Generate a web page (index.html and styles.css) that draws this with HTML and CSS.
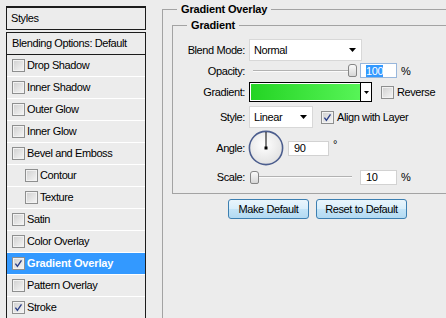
FILE: index.html
```html
<!DOCTYPE html>
<html>
<head>
<meta charset="utf-8">
<link rel="stylesheet" href="styles.css">
</head>
<body>
<div class="app">
  <div class="sidebar">
    <div class="styles-head">Styles</div>
    <div class="list">
      <div class="row blend">Blending Options: Default</div>
      <div class="row"><span class="cb"></span>Drop Shadow</div>
      <div class="row"><span class="cb"></span>Inner Shadow</div>
      <div class="row"><span class="cb"></span>Outer Glow</div>
      <div class="row"><span class="cb"></span>Inner Glow</div>
      <div class="row"><span class="cb"></span>Bevel and Emboss</div>
      <div class="row sub"><span class="cb"></span>Contour</div>
      <div class="row sub"><span class="cb"></span>Texture</div>
      <div class="row"><span class="cb"></span>Satin</div>
      <div class="row"><span class="cb"></span>Color Overlay</div>
      <div class="row active"><span class="cb"><svg width="11" height="11" viewBox="0 0 11 11"><path d="M2.4 5.6 L4.4 8.3 L8.5 2.3" fill="none" stroke="#2b3f88" stroke-width="1.4"/></svg></span>Gradient Overlay</div>
      <div class="row"><span class="cb"></span>Pattern Overlay</div>
      <div class="row"><span class="cb"><svg width="11" height="11" viewBox="0 0 11 11"><path d="M2.4 5.6 L4.4 8.3 L8.5 2.3" fill="none" stroke="#2b3f88" stroke-width="1.4"/></svg></span>Stroke</div>
    </div>
  </div>
  <div class="main">
    <fieldset class="outer">
      <legend>Gradient Overlay</legend>
      <fieldset class="inner">
        <legend>Gradient</legend>
        <div class="frow h-blend">
          <span class="lbl">Blend Mode:</span>
          <div class="select wide"><span>Normal</span><svg width="7" height="4" viewBox="0 0 7 4"><polygon points="0,0 7,0 3.5,4" fill="#000"/></svg></div>
        </div>
        <div class="frow h-opac">
          <span class="lbl">Opacity:</span>
          <div class="slider"><span class="track t-opac"></span><span class="thumb th-opac"></span></div>
          <div class="num focus"><span class="sel">100</span></div>
          <span class="unit">%</span>
        </div>
        <div class="frow h-grad">
          <span class="lbl">Gradient:</span>
          <div class="gbox"><span class="gfill"></span><span class="gdrop"><svg width="5" height="3" viewBox="0 0 5 3"><polygon points="0,0 5,0 2.5,3" fill="#000"/></svg></span></div>
          <span class="cb cb-rev"></span><span class="clbl">Reverse</span>
        </div>
        <div class="frow h-style">
          <span class="lbl">Style:</span>
          <div class="select narrow"><span>Linear</span><svg width="7" height="4" viewBox="0 0 7 4"><polygon points="0,0 7,0 3.5,4" fill="#000"/></svg></div>
          <span class="cb cb-align"><svg width="11" height="11" viewBox="0 0 11 11"><path d="M2.4 5.6 L4.4 8.3 L8.5 2.3" fill="none" stroke="#2b3f88" stroke-width="1.4"/></svg></span><span class="clbl">Align with Layer</span>
        </div>
        <div class="frow h-angle">
          <span class="lbl">Angle:</span>
          <svg class="dial" width="36" height="36" viewBox="0 0 36 36">
            <defs><radialGradient id="dg" cx="45%" cy="40%" r="60%"><stop offset="0" stop-color="#ffffff"/><stop offset="1" stop-color="#e2e2e2"/></radialGradient></defs>
            <circle cx="18" cy="18" r="16.6" fill="url(#dg)" stroke="#4c5e8e" stroke-width="1.6"/>
            <line x1="18" y1="18" x2="18" y2="2" stroke="#000" stroke-width="1"/>
            <rect x="16.5" y="16.5" width="3" height="3" fill="#000"/>
          </svg>
          <div class="num n-angle">90</div>
          <span class="deg">°</span>
        </div>
        <div class="frow h-scale">
          <span class="lbl">Scale:</span>
          <div class="slider"><span class="track t-scale"></span><span class="thumb th-scale"></span></div>
          <div class="num">10</div>
          <span class="unit">%</span>
        </div>
      </fieldset>
      <div class="buttons">
        <button class="btn b-make">Make Default</button>
        <button class="btn b-reset">Reset to Default</button>
      </div>
    </fieldset>
  </div>
</div>
</body>
</html>
```
FILE: styles.css
```css
* { box-sizing: border-box; }
html, body { margin: 0; padding: 0; }
body {
  width: 446px;
  height: 318px;
  overflow: hidden;
  background: #ececec;
  font-family: "Liberation Sans", Arial, sans-serif;
  font-size: 11px;
  letter-spacing: -0.4px;
  color: #000;
}
.app { display: flex; align-items: flex-start; padding-left: 6px; }

/* sidebar */
.sidebar { width: 140px; margin-top: 6px; flex: none; }
.styles-head {
  height: 24px;
  border: 1px solid #1c1c1c;
  border-top-width: 2px;
  padding-left: 4px;
  padding-bottom: 1px;
  display: flex;
  align-items: center;
  margin-bottom: 2px;
}
.list { border: 1px solid #1c1c1c; border-bottom: none; height: 300px; }
.row {
  height: 22px;
  border-bottom: 1px solid #ffffff;
  display: flex;
  align-items: center;
  padding-left: 5px;
  padding-bottom: 1px;
  white-space: nowrap;
}
.row.blend { border-bottom-color: #1c1c1c; }
.row.sub { padding-left: 18px; }
.row.active { background: #3399ff; color: #fff; font-weight: bold; letter-spacing: -0.15px; }
.cb {
  width: 13px;
  height: 13px;
  flex: none;
  border: 1px solid #8e8f8f;
  background: linear-gradient(135deg, #cfcfcf, #f6f6f6);
  box-shadow: inset 0 0 0 1px #f2f2f2;
  margin-right: 2px;
  display: flex;
  align-items: center;
  justify-content: center;
}
.cb svg { display: block; }

/* main */
.main { margin-left: 16px; flex: none; }
fieldset { margin: 0; min-width: 0; border: 1px solid #a3a3a3; }
legend { padding: 0 4px; font-weight: bold; line-height: 13px; letter-spacing: -0.15px; }
.outer { margin-top: 3px; width: 330px; height: 340px; padding: 3px 0 0 9px; }
.outer > legend { margin-left: 5px; }
.inner { width: 300px; padding: 7px 0 5px 0; }
.inner > legend { margin-left: 14px; }

.frow { display: flex; align-items: center; white-space: nowrap; }
.h-blend { height: 22px; }
.h-opac { height: 19px; }
.h-grad { height: 24px; }
.h-style { height: 26px; }
.h-angle { height: 36px; }
.h-scale { height: 22px; }
.lbl { width: 72px; text-align: right; margin-right: 4px; flex: none; }

.select {
  height: 22px;
  background: #fff;
  border: 1px solid #d8d8d8;
  display: flex;
  align-items: center;
  justify-content: space-between;
  padding: 0 5px 0 4px;
  flex: none;
}
.select svg { display: block; }
.select.wide { width: 113px; }
.select.narrow { width: 64px; }

.slider { position: relative; width: 107px; height: 15px; display: flex; align-items: center; flex: none; }
.track { display: block; height: 2px; border-top: 1px solid #b2b2b2; border-bottom: 1px solid #fbfbfb; }
.t-opac { margin-left: 4px; width: 95px; }
.t-scale { margin-left: 9px; width: 94px; }
.thumb {
  position: absolute;
  top: 1px;
  width: 9px;
  height: 13px;
  border: 1px solid #858585;
  border-radius: 3px 3px 2px 2px;
  background: linear-gradient(#fafafa, #d6d6d6);
}
.th-opac { left: 99px; }
.th-scale { left: 1px; }

.num {
  width: 37px;
  height: 15px;
  background: #fff;
  border: 1px solid #d2d2d2;
  margin-left: 4px;
  padding-left: 5px;
  display: flex;
  align-items: center;
  flex: none;
}
.num.focus { border-color: #98b7dc; }
.sel { background: #3399ff; color: #fff; line-height: 12px; }
.unit { margin-left: 4px; }

.gbox {
  width: 123px;
  height: 20px;
  border: 1px solid #000;
  background: #fff;
  padding: 1px 0 1px 1px;
  display: flex;
  flex: none;
}
.gfill { flex: 1; background: linear-gradient(to right, #24d424, #57f457); }
.gdrop {
  width: 11px;
  margin: -1px 0;
  border-left: 1px solid #000;
  background: #fff;
  display: flex;
  align-items: center;
  justify-content: center;
}
.gdrop svg { display: block; }
.cb-rev { margin-left: 9px; }
.cb-align { margin-left: 8px; }
.clbl { margin-left: 1px; }

.dial { display: block; flex: none; margin-left: -1px; }
.n-angle { width: 41px; margin-left: 4px; }
.deg { margin-left: 4px; align-self: flex-start; margin-top: 8px; }

.buttons { display: flex; gap: 7px; margin-top: 5px; padding-left: 56px; }
.btn {
  height: 20px;
  border: 1px solid #3c7fb1;
  border-radius: 3px;
  background: linear-gradient(#e9f5fc, #d8eefb 50%, #c4e4f7 51%, #b3daf2);
  font: inherit;
  letter-spacing: inherit;
  color: #000;
  padding: 0;
}
.b-make { width: 81px; }
.b-reset { width: 91px; }
```
